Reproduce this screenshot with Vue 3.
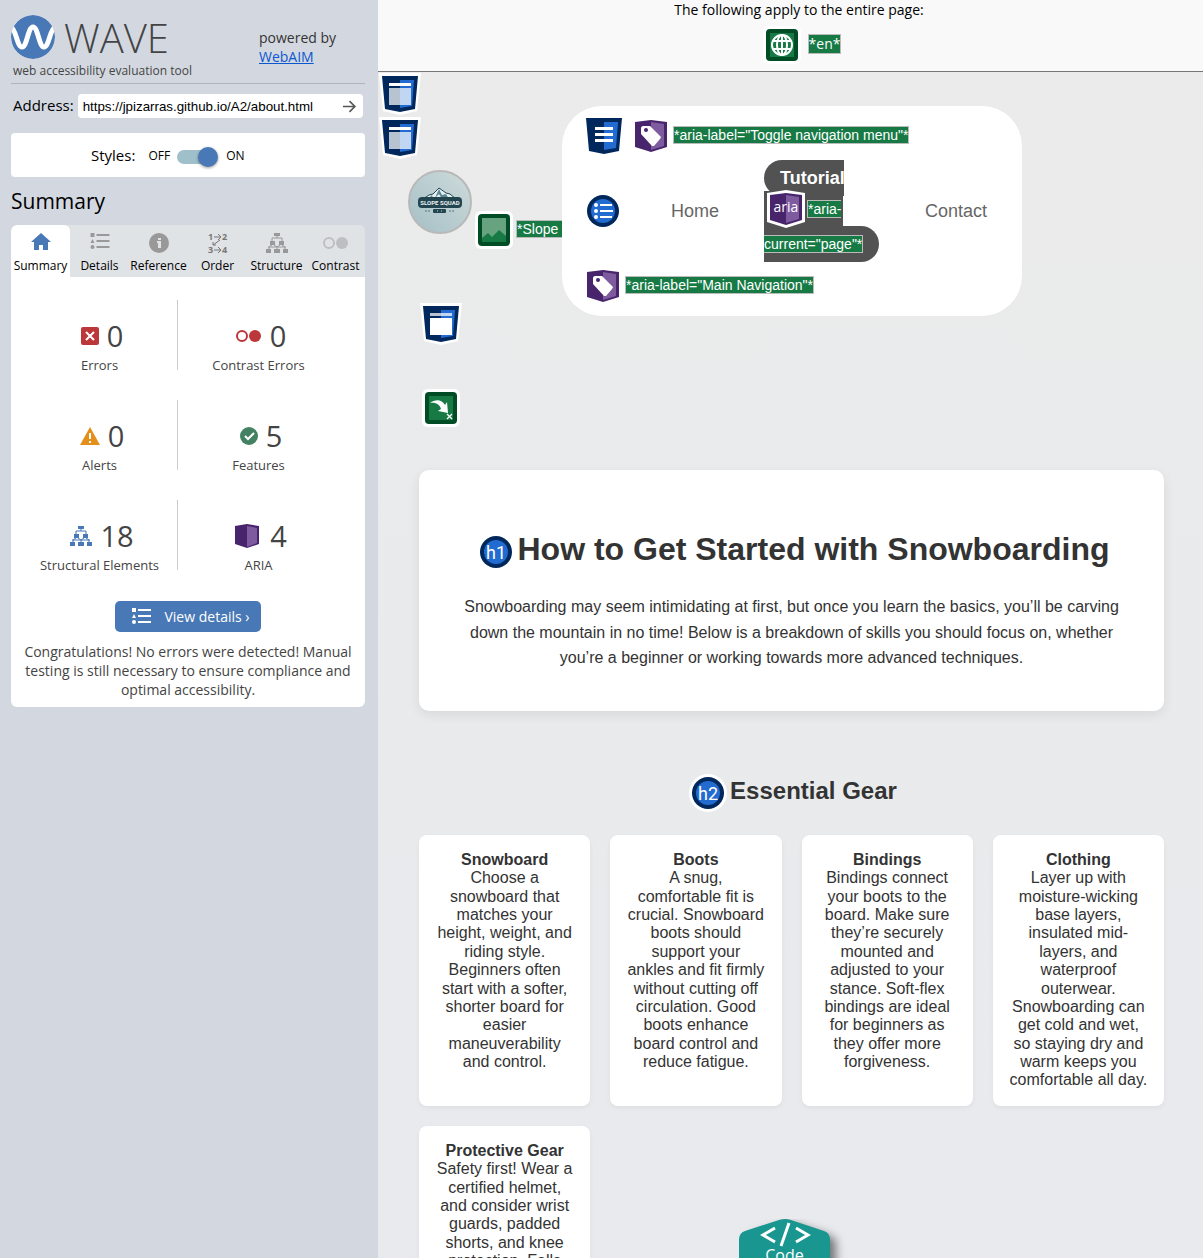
<script setup>
import { ref } from 'vue'

const address = ref('https://jpizarras.github.io/A2/about.html')
const stylesOn = ref(true)
const activeTab = ref('Summary')

const tabs = [
  { name: 'Summary', icon: 'home' },
  { name: 'Details', icon: 'list' },
  { name: 'Reference', icon: 'info' },
  { name: 'Order', icon: 'order' },
  { name: 'Structure', icon: 'tree' },
  { name: 'Contrast', icon: 'contrast' }
]

const counts = [
  { label: 'Errors', value: 0, icon: 'error', color: '#bb3739', width: 18 },
  { label: 'Contrast Errors', value: 0, icon: 'contrast', color: '#bb3739', width: 26 },
  { label: 'Alerts', value: 0, icon: 'alert', color: '#e48e1b', width: 20 },
  { label: 'Features', value: 5, icon: 'feature', color: '#438162', width: 18 },
  { label: 'Structural Elements', value: 18, icon: 'tree', color: '#4878b6', width: 22 },
  { label: 'ARIA', value: 4, icon: 'aria', color: '#48246d', width: 24 }
]

const gear = [
  { name: 'Snowboard', text: 'Choose a snowboard that matches your height, weight, and riding style. Beginners often start with a softer, shorter board for easier maneuverability and control.' },
  { name: 'Boots', text: 'A snug, comfortable fit is crucial. Snowboard boots should support your ankles and fit firmly without cutting off circulation. Good boots enhance board control and reduce fatigue.' },
  { name: 'Bindings', text: 'Bindings connect your boots to the board. Make sure they’re securely mounted and adjusted to your stance. Soft-flex bindings are ideal for beginners as they offer more forgiveness.' },
  { name: 'Clothing', text: 'Layer up with moisture-wicking base layers, insulated mid-layers, and waterproof outerwear. Snowboarding can get cold and wet, so staying dry and warm keeps you comfortable all day.' },
  { name: 'Protective Gear', text: 'Safety first! Wear a certified helmet, and consider wrist guards, padded shorts, and knee protection. Falls' }
]
</script>

<template>
  <svg class="sprite" aria-hidden="true">
    <symbol id="i-home" viewBox="0 0 20 18"><path d="M10 0 0 9h3v8h5v-5h4v5h5V9h3z" fill="currentColor" /></symbol>
    <symbol id="i-list" viewBox="0 0 19 17">
      <path d="M0 0h4v4H0zM2 6l2 4H0zM6 1h13v2H6zM6 7h13v2H6zM6 13h13v2H6z" fill="currentColor" />
      <circle cx="2" cy="14" r="2" fill="currentColor" />
    </symbol>
    <symbol id="i-info" viewBox="0 0 20 20">
      <circle cx="10" cy="10" r="10" fill="currentColor" />
      <path d="M9 5h3v2H9zM8 8h4v7H9v-5H8z" fill="#e0e3e5" />
    </symbol>
    <symbol id="i-order" viewBox="0 0 20 20">
      <path d="M6 4h7M10 1l3 3-3 3M6 17h7M10 14l3 3-3 3M12 7 5 12M5 9v3h3" fill="none" stroke="currentColor" />
    </symbol>
    <symbol id="i-tree" viewBox="0 0 22 20">
      <path d="M8 0h6v3H8zM4 8h5v4H4zM13 8h5v4h-5zM0 16h5v4H0zM8 16h6v4H8zM17 16h5v4h-5z" fill="currentColor" />
      <path d="M11 3v2M6 8V5h10v3M6 12l-3 2v2M8 12l3 2v2M14 12l-3 2M16 12l3 2v2M2 14h18" fill="none" stroke="currentColor" />
    </symbol>
    <symbol id="i-contrast" viewBox="0 0 26 14">
      <circle cx="6" cy="7" r="5" fill="none" stroke="currentColor" stroke-width="2" />
      <circle cx="19" cy="7" r="6" fill="currentColor" />
    </symbol>
    <symbol id="i-error" viewBox="0 0 18 18">
      <rect width="18" height="18" rx="2" fill="currentColor" />
      <path d="m5 5 8 8M13 5l-8 8" stroke="#fff" stroke-width="2" />
    </symbol>
    <symbol id="i-alert" viewBox="0 0 20 18">
      <path d="m10 0 10 18H0z" fill="currentColor" />
      <path d="M9 6h2v6H9zM9 14h2v2H9z" fill="#fff" />
    </symbol>
    <symbol id="i-feature" viewBox="0 0 18 18">
      <circle cx="9" cy="9" r="9" fill="currentColor" />
      <path d="m5 9 3 3 6-6" fill="none" stroke="#fff" stroke-width="2" />
    </symbol>
    <symbol id="i-aria" viewBox="0 0 24 24">
      <path d="M12 0 24 2v18l-12 4-12-4V2z" fill="#48246d" />
      <path d="m12 2 10 2v15l-10 4z" fill="#7e5b9e" />
    </symbol>
    <symbol id="i-arrow" viewBox="0 0 12 12"><path d="M0 6h11M6 1l5 5-5 5" fill="none" stroke="currentColor" stroke-width="1.5" /></symbol>

    <symbol id="i-shield" viewBox="0 0 42 42">
      <path d="M0 0h42l-4 38-17 4-17-4z" fill="#fff" />
      <path d="M3 3h36l-3 33-15 3-15-3z" fill="#00285c" />
      <path d="M21 7h14l-2 26-12 2z" fill="#226bd0" />
    </symbol>
    <symbol id="i-landmark" viewBox="0 0 42 42">
      <use href="#i-shield" />
      <path d="M10 10h22v3H10z" fill="#fff" />
      <path d="M10 15h22v17H10z" fill="#fff" opacity=".72" />
    </symbol>
    <symbol id="i-main" viewBox="0 0 42 42">
      <use href="#i-shield" />
      <path d="M10 10h22v3H10z" fill="#fff" opacity=".72" />
      <path d="M10 15h22v17H10z" fill="#fff" />
    </symbol>
    <symbol id="i-nav" viewBox="0 0 42 42">
      <use href="#i-shield" />
      <path d="M12 12h18v3H12zM12 18h18v3H12zM12 24h18v3H12z" fill="#fff" />
    </symbol>
    <symbol id="i-ariabox" viewBox="0 0 38 38">
      <path d="m19 0 19 3v29l-19 6-19-6V3z" fill="#fff" />
      <path d="m19 3 16 2v25l-16 5-16-5V5z" fill="#48246d" />
      <path d="m19 5 13 2v22l-13 4z" fill="#7e5b9e" />
    </symbol>
    <symbol id="i-tag" viewBox="0 0 38 38">
      <use href="#i-ariabox" />
      <path d="M9 11c0-1 1-2 2-2h7l11 11-1 2-6 7h-2L9 17z" fill="#fff" />
      <circle cx="14" cy="13" r="2" fill="#48246d" />
    </symbol>
    <symbol id="i-green" viewBox="0 0 38 38">
      <rect width="38" height="38" rx="6" fill="#fff" />
      <rect x="3" y="3" width="32" height="32" rx="4" fill="#004c25" />
      <path d="M7 7h24v24H7z" fill="#177a45" />
    </symbol>
    <symbol id="i-globe" viewBox="0 0 38 38">
      <use href="#i-green" />
      <g fill="none" stroke="#fff" stroke-width="2">
        <circle cx="19" cy="19" r="10" /><ellipse cx="19" cy="19" rx="5" ry="10" />
        <path d="M19 9v20M10 15h18M10 23h18" />
      </g>
    </symbol>
    <symbol id="i-image" viewBox="0 0 38 38">
      <use href="#i-green" />
      <path d="M7 7h24v24H7z" fill="#68a380" />
      <path d="m7 27 6-5 4 4 7-7 7 6v6H7z" fill="#177a45" />
    </symbol>
    <symbol id="i-skip" viewBox="0 0 38 38">
      <use href="#i-green" />
      <path d="M8 14c5-4 12-4 15 2l2-3 1 11-10-2 3-2c-1-4-5-7-11-6z" fill="#fff" />
      <path d="m25 25 5 5M30 25l-5 5" stroke="#fff" stroke-width="1.3" />
    </symbol>
    <symbol id="i-round" viewBox="0 0 38 38">
      <circle cx="19" cy="19" r="19" fill="#fff" />
      <circle cx="19" cy="19" r="16" fill="#00285c" />
      <circle cx="19" cy="19" r="12" fill="#226bd0" />
    </symbol>
    <symbol id="i-ulist" viewBox="0 0 38 38">
      <use href="#i-round" />
      <g fill="#fff"><circle cx="12" cy="13" r="2" /><circle cx="12" cy="19" r="2" /><circle cx="12" cy="25" r="2" />
        <path d="M16 12h12v2H16zM16 18h13v2H16zM16 24h12v2H16z" /></g>
    </symbol>
  </svg>

  <div class="app">
    <aside class="sidebar">
      <header class="masthead">
        <div class="logo">
          <div class="logo-row">
            <svg class="logo-mark" viewBox="0 0 44 44" aria-hidden="true">
              <circle cx="22" cy="22" r="22" fill="#4878b6" />
              <path d="M0 12C5 14 6 32 11 32S17 12 22 12S28 32 33 32S39 14 44 12" fill="none" stroke="#fff" stroke-width="5" />
            </svg>
            <span class="wordmark">WAVE</span>
          </div>
          <p class="tagline">web accessibility evaluation tool</p>
        </div>
        <p class="powered">powered by<br /><a href="#webaim">WebAIM</a></p>
      </header>

      <form class="address" @submit.prevent>
        <label for="address">Address:</label>
        <div class="address-box">
          <input id="address" v-model="address" type="text" />
          <button type="submit" aria-label="Submit"><svg width="13" height="13"><use href="#i-arrow" /></svg></button>
        </div>
      </form>

      <div class="styles-box">
        <label for="styles" class="styles-label">Styles:</label>
        <span>OFF</span>
        <input id="styles" v-model="stylesOn" class="switch" type="checkbox" />
        <span>ON</span>
      </div>

      <h2 class="section-title">Summary</h2>
      <nav class="tabs">
        <button v-for="t in tabs" :key="t.name" type="button" class="tab" :class="['tab-' + t.icon, { active: activeTab === t.name }]" @click="activeTab = t.name">
          <svg class="tab-icon">
            <use :href="'#i-' + t.icon" />
            <g v-if="t.icon === 'order'" class="digits">
              <text x="0" y="7">1</text><text x="14" y="7">2</text><text x="0" y="20">3</text><text x="14" y="20">4</text>
            </g>
          </svg>
          <span>{{ t.name }}</span>
        </button>
      </nav>
      <section class="panel">
        <ul class="counts">
          <li v-for="c in counts" :key="c.label">
            <div class="count">
              <svg :width="c.width" height="24" :style="{ color: c.color }" :class="'count-' + c.icon"><use :href="'#i-' + c.icon" /></svg>
              <span>{{ c.value }}</span>
            </div>
            <div class="count-label">{{ c.label }}</div>
          </li>
        </ul>
        <button type="button" class="details-button">
          <svg width="19" height="17"><use href="#i-list" /></svg>View details ›
        </button>
        <p class="result">Congratulations! No errors were detected! Manual testing is still necessary to ensure compliance and optimal accessibility.</p>
      </section>
    </aside>

    <div class="preview">
      <div class="page-notes">
        <p>The following apply to the entire page:</p>
        <div class="note-row">
          <svg width="38" height="38"><use href="#i-globe" /></svg>
          <span class="note sans">*en*</span>
        </div>
      </div>

      <header class="site-header">
        <div class="brand-col">
          <svg class="landmark"><use href="#i-landmark" /></svg>
          <svg class="landmark"><use href="#i-landmark" /></svg>
          <div class="brand">
            <svg class="brand-logo" viewBox="0 0 64 64" role="img" aria-label="Slope Squad">
              <defs><linearGradient id="sky" x1="0" y1="1" x2="1" y2="0"><stop offset="0" stop-color="#a4bfc5" /><stop offset="1" stop-color="#cfdbdb" /></linearGradient></defs>
              <circle cx="32" cy="32" r="31" fill="url(#sky)" stroke="#b9b9b9" stroke-width="2" />
              <path d="m15 29 6-4 4-1 6-6 7 5 4 1 6 5z" fill="#e4f0f2" stroke="#23454f" />
              <path d="m31 19 3 6 4-1 3 5h-7l-3-5-4 4zM24 25l-4 4h5z" fill="#5c8792" />
              <rect x="10" y="27" width="44" height="11" rx="4" fill="#23454f" />
              <text x="32" y="35" text-anchor="middle" class="brand-text">SLOPE SQUAD</text>
              <rect x="25" y="39" width="13" height="4" rx="1" fill="#23454f" />
              <path d="M17 41h6M41 41h6" stroke="#55737b" stroke-dasharray="2 1" />
              <path d="M29 41h1M33 41h1" stroke="#c8d8da" />
            </svg>
            <svg class="brand-badge" width="38" height="38"><use href="#i-image" /></svg>
            <span class="note brand-note">*Slope</span>
          </div>
        </div>

        <nav class="site-nav">
          <div class="nav-row">
            <svg width="42" height="42"><use href="#i-nav" /></svg>
            <svg class="second" width="38" height="38"><use href="#i-tag" /></svg>
            <span class="note">*aria-label="Toggle navigation menu"*</span>
          </div>
          <div class="nav-links">
            <svg width="38" height="38"><use href="#i-ulist" /></svg>
            <a href="#home" class="link-home">Home</a>
            <a href="#tutorial" class="current">
              <span class="cur-top">Tutorial</span>
              <span class="cur-mid"><svg width="38" height="38"><use href="#i-ariabox" /><text x="19" y="22" text-anchor="middle" class="aria-text">aria</text></svg><span class="note">*aria-</span></span>
              <span class="cur-end"><span class="note">current="page"*</span></span>
            </a>
            <a href="#contact" class="link-contact">Contact</a>
          </div>
          <div class="nav-row last">
            <svg width="38" height="38"><use href="#i-tag" /></svg>
            <span class="note">*aria-label="Main Navigation"*</span>
          </div>
        </nav>
      </header>

      <main class="content">
        <svg class="landmark main-mark"><use href="#i-main" /></svg>
        <svg class="skip-mark" width="38" height="38"><use href="#i-skip" /></svg>

        <section class="hero">
          <h1>
            <svg width="38" height="38"><use href="#i-round" /><text x="19" y="26" text-anchor="middle" class="badge-text">h1</text></svg>How to Get Started with Snowboarding
          </h1>
          <p>Snowboarding may seem intimidating at first, but once you learn the basics, you’ll be carving down the mountain in no time! Below is a breakdown of skills you should focus on, whether you’re a beginner or working towards more advanced techniques.</p>
        </section>

        <h2 class="gear-title">
          <svg width="38" height="38"><use href="#i-round" /><text x="19" y="26" text-anchor="middle" class="badge-text">h2</text></svg>Essential Gear
        </h2>
        <div class="gear">
          <article v-for="g in gear" :key="g.name" class="card">
            <h3>{{ g.name }}</h3>
            <p>{{ g.text }}</p>
          </article>
        </div>
      </main>

      <button type="button" class="code-tab">
        <svg width="112" height="39" viewBox="0 0 112 39" aria-hidden="true">
          <path d="M0 21q0-7 6-9L40 1q6-2 12 0l33 11q6 2 6 9v30H0z" fill="#18968f" />
          <path d="m36 9-12 7 12 7M57 9l12 7-12 7M50 4l-8 23" fill="none" stroke="#fff" stroke-width="3" />
        </svg>
        <span>Code</span>
      </button>
    </div>
  </div>
</template>

<style>
body { margin: 0; }
</style>

<style scoped>
* { box-sizing: border-box; }
p, h1, h2, h3, ul { margin: 0; padding: 0; }
button { border: 0; padding: 0; background: none; font: inherit; color: inherit; cursor: pointer; }
svg { flex: none; }
.sprite { position: absolute; width: 0; height: 0; }

.app { display: flex; height: 100vh; overflow: hidden; }

/* Sidebar */
.sidebar {
  flex: none;
  width: 378px;
  padding: 15px 13px 0 11px;
  background: #d3d8e0;
  color: #000;
  font: 14px/19px "Open Sans", sans-serif;
}
.masthead { display: flex; height: 69px; border-bottom: 1px solid #b1b5ba; }
.logo { width: 248px; }
.logo-row { display: flex; align-items: center; height: 44px; gap: 9px; }
.logo-mark { width: 44px; height: 44px; border-radius: 50%; }
.wordmark { font-weight: 300; font-size: 40px; line-height: 44px; color: #444; margin-top: 2px; }
.tagline { margin: 2px 0 0 2px; font-size: 12px; color: #444; }
.powered { margin-top: 13px; color: #333; }
.powered a { color: #0b57d0; }

.address { display: flex; align-items: center; gap: 4px; margin: 10px 2px 0; font-size: 15px; line-height: 18px; }
.address label { margin-bottom: 2px; }
.address-box { display: flex; flex: 1; align-items: center; height: 24px; padding: 0 7px 0 5px; border-radius: 4px; background: #fff; }
.address-box input { flex: 1; min-width: 0; border: 0; padding: 0; outline: 0; background: none; font-family: "Liberation Sans", sans-serif; }
.address-box button { display: flex; color: #555; }

.styles-box { display: flex; align-items: center; height: 44px; margin-top: 15px; padding-left: 80px; border-radius: 4px; background: #fff; font-size: 12px; }
.styles-label { margin-right: 13px; font-size: 15px; }
.switch { position: relative; appearance: none; width: 40px; height: 14px; margin: 3px 9px 0 7px; border-radius: 7px; background: #9fc0ca; }
.switch::before { content: ""; position: absolute; top: -3px; left: 0; width: 20px; height: 20px; border-radius: 50%; background: #4878b6; box-shadow: 0 1px 3px rgba(0, 0, 0, .4); }
.switch:checked::before { left: 21px; }

.section-title { margin: 10px 0; font-weight: 400; font-size: 21px; line-height: 28px; }
.tabs { display: flex; height: 52px; overflow: hidden; border-radius: 6px 6px 0 0; background: #e0e3e5; }
.tab { display: flex; flex: 1 1 0; min-width: 0; flex-direction: column; align-items: center; padding-top: 8px; border-radius: 6px 6px 0 0; font-size: 12px; line-height: 17px; color: #000; white-space: nowrap; }
.tab-icon { width: 20px; height: 20px; margin-bottom: 4px; color: #999; }
.tab-home .tab-icon { height: 18px; margin-bottom: 6px; }
.tab-list .tab-icon { height: 17px; margin-bottom: 7px; }
.tab-tree .tab-icon { width: 22px; }
.tab-contrast .tab-icon { width: 26px; color: #bdbfc1; }
.tab-order .tab-icon { overflow: visible; color: #777; }
.digits { fill: currentColor; font: 700 9px "Open Sans", sans-serif; }
.tab.active { background: #fff; }
.tab.active .tab-icon { color: #4878b6; }

.panel { padding: 23px 8px 8px; border-radius: 0 0 6px 6px; background: #fff; color: #444; text-align: center; }
.counts { display: grid; grid-template-columns: 159px 1fr; row-gap: 30px; padding-right: 18px; list-style: none; }
.counts li { height: 70px; padding-top: 18px; }
.counts li:nth-child(odd) { padding-left: 3px; border-right: 1px solid #ccc; }
.count { display: flex; align-items: center; justify-content: center; gap: 8px; height: 35px; padding-left: 5px; font-size: 29px; line-height: 35px; }
.count-tree { height: 20px; }
.count-error, .count-feature, .count-alert { height: 18px; }
.count-aria { margin-right: 3px; }
.count-label { margin-top: 3px; font-size: 13px; line-height: 19px; }
.details-button { display: inline-flex; align-items: center; gap: 13px; height: 31px; margin: 31px 0 10px; padding: 0 11px 1px 17px; border-radius: 5px; background: #4878b6; color: #fff; }

/* Evaluated page */
.preview { position: relative; flex: 1; min-width: 0; overflow: hidden; background: linear-gradient(#ebebeb, #e8eaed); color: #333; font: 16px/1.15 "Liberation Sans", sans-serif; }
.page-notes { height: 72px; padding-left: 17px; border-bottom: 1px solid #777; background: #f9f9f9; color: #000; font: 14px/19px "Open Sans", sans-serif; text-align: center; }
.note-row { display: flex; align-items: center; justify-content: center; gap: 7px; margin: 7px 0 0 6px; }
.note { border: 1px solid #bbb; background: #177a45; color: #fff; font-size: 14px; line-height: 16px; font-weight: 400; white-space: nowrap; }
.note.sans { line-height: 18px; margin-bottom: 2px; }

.site-header { display: flex; align-items: flex-start; height: 230px; }
.brand-col { width: 184px; overflow: hidden; }
.landmark { display: block; width: 42px; height: 42px; margin: 1px 0 2px 1px; }
.brand { display: flex; margin: 11px 0 0 30px; }
.brand-logo { width: 64px; height: 64px; }
.brand-text { fill: #e8f0f0; font: 700 6px Roboto, sans-serif; }
.brand-badge { margin: 41px 3px 0 3px; }
.brand-note { align-self: flex-start; margin-top: 50px; padding-right: 4px; }

.site-nav { width: 460px; margin-top: 34px; padding: 9px 20px 9px 21px; border-radius: 40px; background: #fff; }
.nav-row { display: flex; align-items: center; height: 42px; }
.nav-row .second { margin-left: 7px; }
.nav-row .note { margin: 0 0 2px 3px; }
.nav-row.last { padding-left: 1px; }
.nav-links { display: flex; align-items: center; height: 108px; padding-left: 1px; font-size: 18px; line-height: 20px; }
.nav-links a { color: #666; text-decoration: none; }
.link-home { margin-left: 49px; }
.nav-links .current { display: flex; flex-direction: column; align-items: flex-start; width: 116px; margin-left: 45px; color: #fff; }
.cur-top { width: 80px; height: 36px; margin-bottom: -5px; padding: 8px 0 0 16px; border-radius: 18px 0 0 18px; background: #525252; font-weight: 700; }
.cur-mid { display: flex; align-items: center; width: 79px; height: 35px; padding-left: 3px; background: #525252; }
.cur-mid svg { position: relative; z-index: 1; }
.cur-mid .note { margin-left: 2px; border-right: 0; }
.aria-text { fill: #fff; font: 14px "Open Sans", sans-serif; }
.cur-end { display: flex; align-items: center; height: 36px; padding-right: 16px; border-radius: 0 18px 18px 0; background: #525252; }
.cur-end .note { border-left: 0; }
.link-contact { margin-left: 45px; }

.content { padding: 1px 39px 0 41px; }
.landmark.main-mark { margin: 0 0 44px 1px; }
.skip-mark { display: block; margin: 0 0 43px 3px; }
.hero { padding: 60px 40px 40px; border-radius: 10px; background: #fff; box-shadow: 0 4px 12px rgba(0, 0, 0, .08); text-align: center; }
h1, .gear-title { display: flex; align-items: center; justify-content: center; gap: 3px; height: 38px; padding-left: 3px; }
h1 { margin-bottom: 26px; font-size: 32px; }
h1 svg, .gear-title svg { margin-top: 5px; }
.hero p { line-height: 1.6; }
.badge-text { fill: #fff; font: 18px Roboto, sans-serif; }
.gear-title { margin: 61px 0 25px; font-size: 24px; }
.gear { display: grid; grid-template-columns: repeat(4, 1fr); gap: 20px; }
.card { padding: 16px; border-radius: 8px; background: #fff; box-shadow: 0 2px 5px rgba(0, 0, 0, .05); text-align: center; }
.card h3 { font-size: 16px; }

.code-tab { position: absolute; bottom: 0; left: 50%; width: 112px; height: 39px; margin-left: -52px; overflow: hidden; color: #fff; font: 16px/22px "Open Sans", sans-serif; }
.code-tab svg { display: block; overflow: visible; filter: drop-shadow(6px 5px 5px rgba(0, 0, 0, .5)); }
.code-tab span { position: absolute; top: 25px; left: 0; width: 92px; text-align: center; }
</style>
